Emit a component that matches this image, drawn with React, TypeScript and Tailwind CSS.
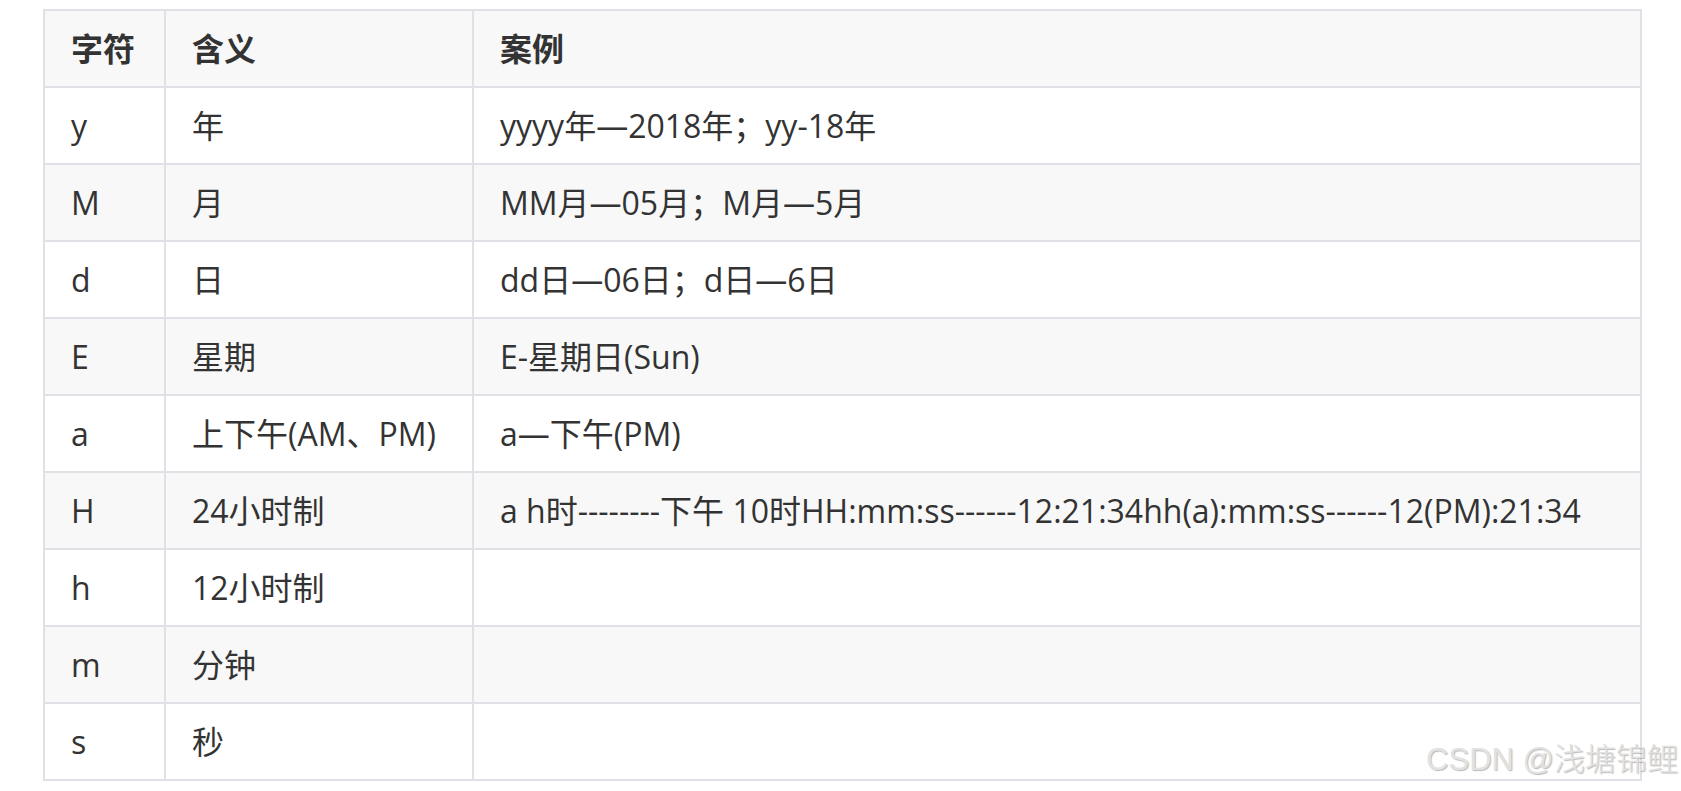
import React from 'react';

// Date format pattern reference table
const ROWS = [
  { ch: 'y', meaning: '年', example: 'yyyy年—2018年；yy-18年' },
  { ch: 'M', meaning: '月', example: 'MM月—05月；M月—5月' },
  { ch: 'd', meaning: '日', example: 'dd日—06日；d日—6日' },
  { ch: 'E', meaning: '星期', example: 'E-星期日(Sun)' },
  { ch: 'a', meaning: '上下午(AM、PM)', example: 'a—下午(PM)' },
  { ch: 'H', meaning: '24小时制', example: 'a h时--------下午 10时HH:mm:ss------12:21:34hh(a):mm:ss------12(PM):21:34' },
  { ch: 'h', meaning: '12小时制', example: '' },
  { ch: 'm', meaning: '分钟', example: '' },
  { ch: 's', meaning: '秒', example: '' },
];

const cell = 'border-2 border-[#e0e0e6] pl-[26px] pr-2 py-0 align-middle whitespace-nowrap';

export default function App() {
  return (
    <div
      className="relative w-[1681px] h-[791px] bg-white overflow-hidden text-[#333333]"
      style={{ fontFamily: '"Open Sans", "Noto Sans CJK SC", sans-serif' }}
    >
      <div className="pt-[9px] pl-[43px]">
        <table className="table-fixed border-collapse w-[1599px] text-[32px] leading-[44px]">
          <colgroup>
            <col className="w-[121px]" />
            <col className="w-[308px]" />
            <col />
          </colgroup>
          <thead>
            <tr className="h-[77px] bg-[#f8f8f8]">
              <th className={`${cell} text-left font-bold`}>字符</th>
              <th className={`${cell} text-left font-bold`}>含义</th>
              <th className={`${cell} text-left font-bold`}>案例</th>
            </tr>
          </thead>
          <tbody>
            {ROWS.map((r, i) => (
              <tr key={r.ch} className={`h-[77px] ${i % 2 === 1 ? 'bg-[#f8f8f8]' : 'bg-white'}`}>
                <td className={cell}>{r.ch}</td>
                <td className={cell}>{r.meaning}</td>
                <td className={cell}>{r.example}</td>
              </tr>
            ))}
          </tbody>
        </table>
      </div>

      {/* watermark */}
      <div
        className="absolute right-[3px] top-[740px] text-[31px] leading-[40px] text-[#e2e2e2] whitespace-nowrap"
        style={{
          fontFamily: '"Liberation Sans", "Noto Sans CJK SC", sans-serif',
          fontWeight: 300,
          textShadow: '1px 1px 1px rgba(0,0,0,0.28)',
        }}
      >
        CSDN @浅塘锦鲤
      </div>
    </div>
  );
}
